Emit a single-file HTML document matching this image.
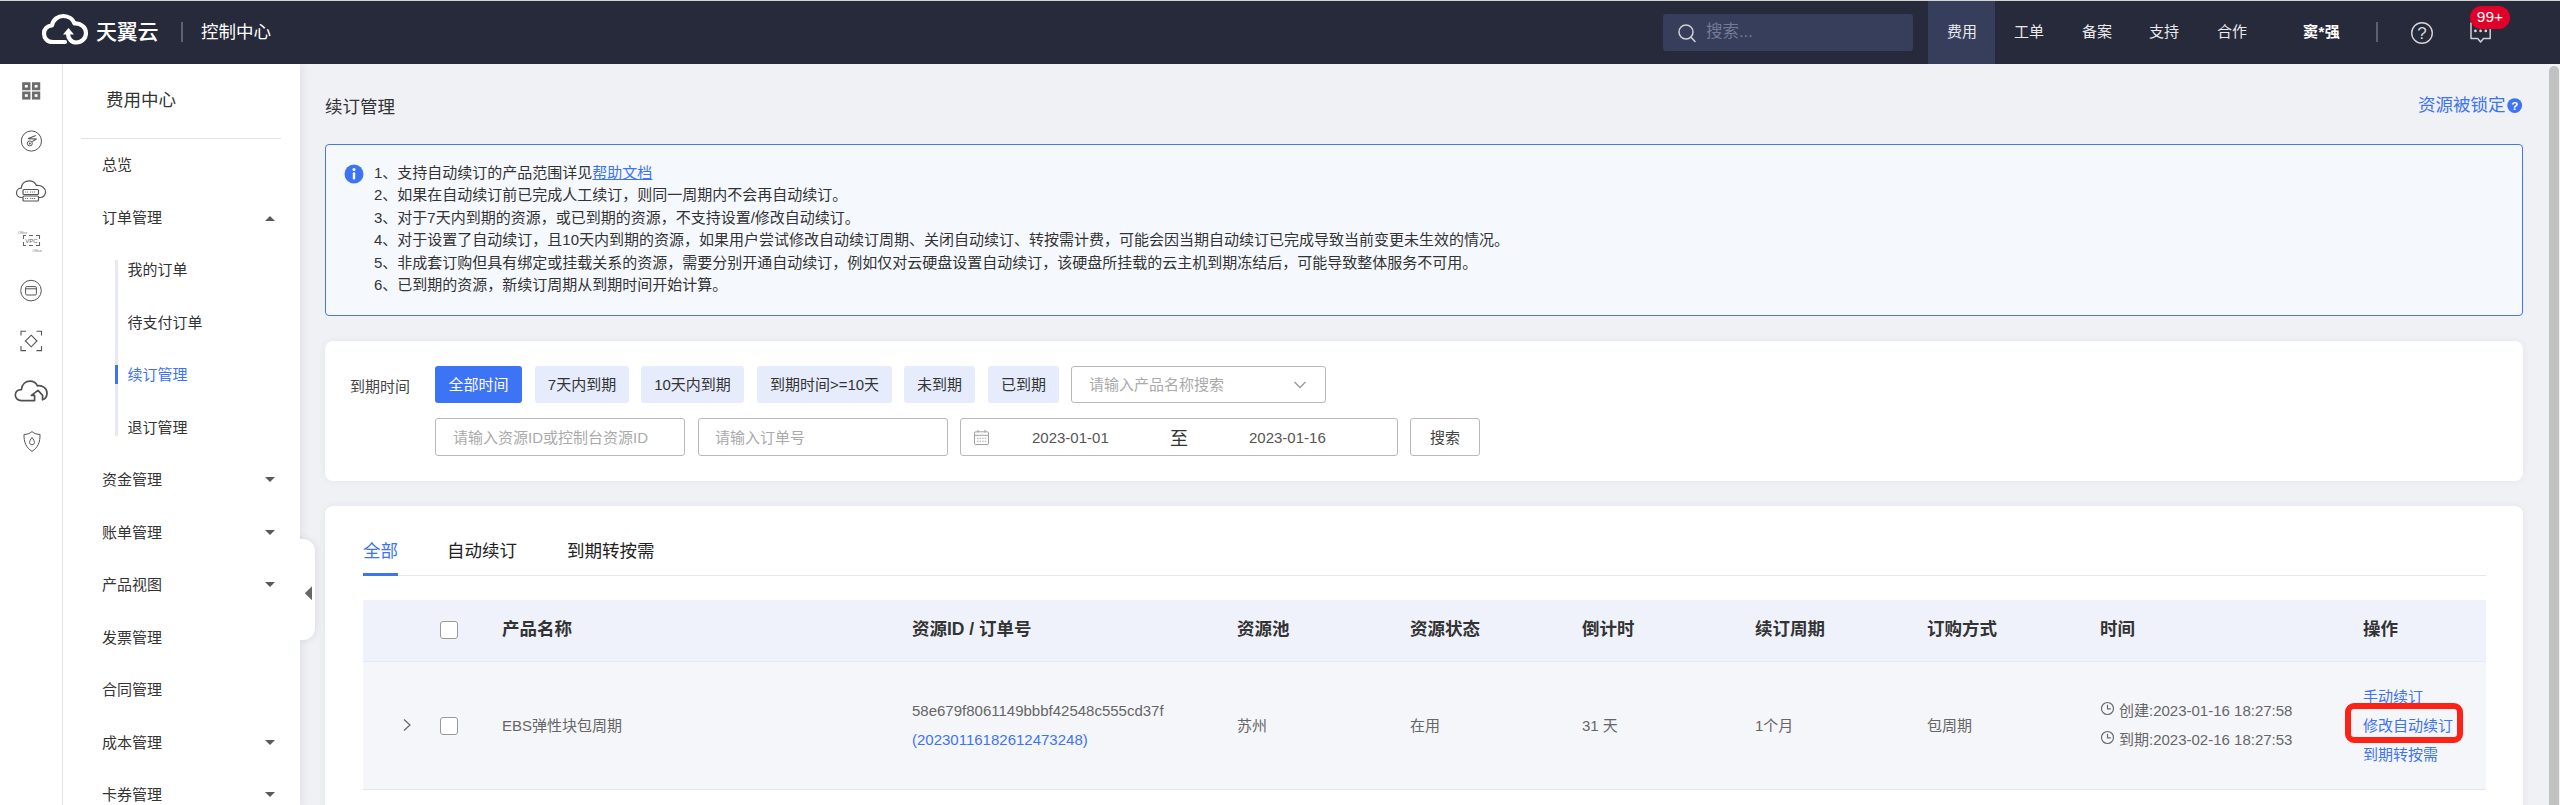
<!DOCTYPE html>
<html lang="zh-CN">
<head>
<meta charset="utf-8">
<title>续订管理</title>
<style>
*{box-sizing:border-box;margin:0;padding:0}
html,body{width:2560px;height:805px;overflow:hidden;background:#f0f1f5}
body{font-family:"Liberation Sans","Noto Sans CJK SC",sans-serif;color:#333;position:relative;font-size:15px}
.abs{position:absolute}
.t{position:absolute;white-space:nowrap;line-height:1}
/* header */
#hdr{position:absolute;left:0;top:0;width:2560px;height:64px;background:#272a3a;border-top:1px solid #d3d3d1}
#hdr .t{color:#fff}
.nav{font-size:15px;top:24px}
/* rail */
#rail{position:absolute;left:0;top:64px;width:63px;height:741px;background:#fff;border-right:1px solid #e3e6f0}
#side{position:absolute;left:63px;top:64px;width:237px;height:741px;background:#fff;box-shadow:1px 0 9px rgba(30,45,80,.10);clip-path:inset(0 -14px 0 0)}
.m1{font-size:15px;color:#333;left:102px}
.m2{font-size:15px;color:#333;left:127.5px}
.car{position:absolute;left:265px;width:0;height:0;border-left:5px solid transparent;border-right:5px solid transparent}
.car.d{border-top:5px solid #5a5a5a}
.car.u{border-bottom:5px solid #5a5a5a}
/* main */
.panel{position:absolute;left:325px;width:2198px;background:#fff;border-radius:8px;box-shadow:0 0 9px rgba(30,45,80,.055)}
.fb{position:absolute;top:366px;height:37px;border-radius:3px;background:#e6ecfc;color:#333;font-size:15px;line-height:37px;text-align:center;white-space:nowrap}
.inp{position:absolute;border:1px solid #b9b9b9;border-radius:3px;background:#fff}
.ph{color:#aaa;font-size:15px}
.th{font-size:17.5px;font-weight:bold;color:#333;top:621px}
.td{font-size:15px;color:#666;top:718px}
.lk{color:#3d73f5}
</style>
</head>
<body>
<!-- HEADER -->
<div id="hdr"></div>
<svg class="abs" style="left:40px;top:12px" width="52" height="34" viewBox="0 0 52 34"><path d="M25 30 H13 C7 30 4 26 4 21.5 C4 17 7.5 13.5 12 13.5 C13 7.5 18 4 23.5 4 C29 4 33 7.5 34.5 11.5 C40.5 11 46 15 46 21 C46 26.5 41.5 30.5 36.5 30.5 C31.5 30.5 28 26.5 28 22" fill="none" stroke="#fff" stroke-width="4.2" stroke-linecap="round" stroke-linejoin="round"/><path d="M23 22.5 L28.5 16 L34 22.5 Z" fill="#fff"/></svg>
<div class="t" style="left:96px;top:20.5px;font-size:21px;font-weight:500;color:#fff;letter-spacing:-0.3px">天翼云</div>
<div class="abs" style="left:181px;top:22px;width:2px;height:20px;background:#5d6070"></div>
<div class="t" style="left:201px;top:23.5px;font-size:17.5px;color:#fff">控制中心</div>

<div class="abs" style="left:1663px;top:14px;width:250px;height:37px;background:#363e5b;border-radius:3px"></div>
<svg class="abs" style="left:1676px;top:22px" width="22" height="22" viewBox="0 0 22 22"><circle cx="10" cy="10" r="7" fill="none" stroke="#d0d0d4" stroke-width="1.5"/><path d="M15 15.2 L19 19.5" stroke="#d0d0d4" stroke-width="1.6" stroke-linecap="round"/></svg>
<div class="t" style="left:1706px;top:23px;font-size:16.5px;color:#737a94">搜索...</div>
<div class="abs" style="left:1928px;top:1px;width:67px;height:63px;background:#363e5b"></div>
<div class="t nav" style="left:1947px;color:#e9e9ec">费用</div>
<div class="t nav" style="left:2014px;color:#e9e9ec">工单</div>
<div class="t nav" style="left:2082px;color:#e9e9ec">备案</div>
<div class="t nav" style="left:2149px;color:#e9e9ec">支持</div>
<div class="t nav" style="left:2217px;color:#e9e9ec">合作</div>
<div class="t nav" style="left:2303px;color:#fff;font-weight:bold;letter-spacing:0.5px">窦*强</div>
<div class="abs" style="left:2376px;top:22px;width:2px;height:20px;background:#5d6070"></div>
<svg class="abs" style="left:2410px;top:21px" width="24" height="24" viewBox="0 0 24 24"><circle cx="12" cy="12" r="10.3" fill="none" stroke="#d4d4d8" stroke-width="1.4"/><text x="12" y="18" font-size="17" text-anchor="middle" fill="#d4d4d8" font-family="Liberation Sans, sans-serif">?</text></svg>
<svg class="abs" style="left:2468px;top:20px" width="26" height="26" viewBox="0 0 26 26"><path d="M3 3 H22.2 V18.5 H15.5 L12.6 22 L9.7 18.5 H3 Z" fill="none" stroke="#d0d0d4" stroke-width="1.5" stroke-linejoin="round"/><circle cx="7.4" cy="10.9" r="1.35" fill="#d8d8dc"/><circle cx="12.6" cy="10.9" r="1.35" fill="#d8d8dc"/><circle cx="17.8" cy="10.9" r="1.35" fill="#d8d8dc"/></svg>
<div class="abs" style="left:2470px;top:6px;width:40px;height:23px;border-radius:11.5px;background:#e1002a;color:#fff;font-size:15.5px;line-height:21px;text-align:center">99+</div>

<!-- RAIL + SIDEBAR -->
<div id="rail"></div>
<div id="side"></div>

<!-- rail icons -->
<svg class="abs" style="left:22px;top:82px" width="20" height="19" viewBox="0 0 20 19"><g fill="none" stroke="#6c6c6c" stroke-width="2.7"><rect x="1.5" y="1.6" width="5.6" height="5.3"/><rect x="11.3" y="1.6" width="5.6" height="5.3"/><rect x="1.5" y="10.9" width="5.6" height="5.3"/><rect x="11.3" y="10.9" width="5.6" height="5.3"/></g></svg>
<svg class="abs" style="left:19px;top:129px" width="24" height="24" viewBox="0 0 24 24"><g fill="none" stroke="#555" stroke-width="1"><circle cx="12.4" cy="12" r="10.1"/><circle cx="10.8" cy="14.4" r="2.5"/><path d="M16.8 6.6 L9.4 9.6 L17.4 10 L13.2 12.6" stroke-width="1.1" stroke-linejoin="round"/></g><circle cx="10.8" cy="14.4" r="1" fill="#555"/></svg>
<svg class="abs" style="left:14px;top:178px" width="34" height="26" viewBox="0 0 34 26"><g fill="none" stroke="#555" stroke-width="1.2" stroke-linejoin="round"><path d="M8.5 19.5 H7 C4 19.5 2.5 17 2.5 14.8 C2.5 12 4.8 10.2 7.2 10.2 C7.6 5.6 11 2.8 15.2 2.8 C18.6 2.8 21.2 4.6 22.4 7.4 C27.4 6.8 31.5 9.8 31.5 14 C31.5 17.4 29 19.5 26.5 19.5 H25"/><rect x="9" y="11.5" width="15.5" height="5" rx="1"/><rect x="9" y="18" width="15.5" height="5" rx="1"/></g><path d="M11 14 H14 M16 14 H22 M11 20.5 H14 M16 20.5 H22" stroke="#777" stroke-width="1" stroke-dasharray="1.2 .8"/></svg>
<svg class="abs" style="left:17px;top:229px" width="30" height="24" viewBox="0 0 30 24"><g fill="none" stroke="#666" stroke-width="1.1"><path d="M9 6.5 H6.5 V10 M6.5 13 V16.5 H9 M19 6.5 H22.5 V10 M22.5 13 V16.5 H19 M12 6.5 H16 M12 16.5 H16"/></g><text x="14.5" y="13.8" font-size="6" text-anchor="middle" fill="#666" font-family="Liberation Sans, sans-serif">VPC</text><text x="1" y="4.6" font-size="3.6" fill="#777" font-family="Liberation Sans, sans-serif">Office</text><text x="15.5" y="22.6" font-size="3.6" fill="#777" font-family="Liberation Sans, sans-serif">Office</text></svg>
<svg class="abs" style="left:19px;top:279px" width="24" height="24" viewBox="0 0 24 24"><g fill="none" stroke="#555" stroke-width="1"><circle cx="12" cy="11.6" r="10.3"/><rect x="6.6" y="7.6" width="10.8" height="8.4" rx="1.2"/><path d="M6.6 9.8 H17.4"/></g></svg>
<svg class="abs" style="left:19px;top:329px" width="25" height="24" viewBox="0 0 25 24"><g fill="none" stroke="#555" stroke-width="1.1"><path d="M2 6.5 V2.3 H7 M17.5 2.3 H22.5 V6.5 M22.5 17 V21.6 H17.5 M7 21.6 H2 V17"/><path d="M12.2 6.2 L18 12 L12.2 17.8 L6.4 12 Z"/></g></svg>
<svg class="abs" style="left:13px;top:378px" width="36" height="26" viewBox="0 0 36 26"><path d="M14 22.6 H8.2 C4.6 22.6 2.3 20 2.3 17 C2.3 13.6 5 11.4 8.4 11.6 C9 6.4 12.6 3.2 17 3.2 C20.4 3.2 23 5 24.4 7.8 C29.6 7 34 10.4 34 15 C34 18.6 32 21 29.6 21.8 L29.6 17.4 L25 12.4 L18.4 17.4 L21.6 17.4 L21.6 22.6 Z" fill="none" stroke="#505050" stroke-width="1.7" stroke-linejoin="round"/></svg>
<svg class="abs" style="left:22px;top:430px" width="20" height="23" viewBox="0 0 20 23"><g fill="none" stroke="#555" stroke-width="1" stroke-linejoin="round"><path d="M10 1.6 C7.6 3.6 5 4.4 2 4.4 C1.8 12 4 17.6 10 21.4 C16 17.6 18.2 12 18 4.4 C15 4.4 12.4 3.6 10 1.6 Z"/><path d="M10 7.4 C8.6 9.6 7.6 10.8 7.6 12.4 C7.6 13.8 8.6 14.8 10 14.8 C11.4 14.8 12.4 13.8 12.4 12.4 C12.4 10.8 11.4 9.6 10 7.4 Z"/></g></svg>
<div class="t" style="left:106px;top:92px;font-size:17.5px;color:#333">费用中心</div>
<div class="abs" style="left:81px;top:137.5px;width:200px;height:1px;background:#dfe3ee"></div>
<div class="t m1" style="top:157px">总览</div>
<div class="t m1" style="top:210px">订单管理</div><div class="car u" style="top:216px"></div>
<div class="abs" style="left:115px;top:260px;width:3px;height:176px;background:#e6e9f5"></div>
<div class="abs" style="left:115px;top:365px;width:3px;height:19px;background:#3d73f5"></div>
<div class="t m2" style="top:262px">我的订单</div>
<div class="t m2" style="top:315px">待支付订单</div>
<div class="t m2" style="top:367px;color:#3d73f5">续订管理</div>
<div class="t m2" style="top:420px">退订管理</div>
<div class="t m1" style="top:472px">资金管理</div><div class="car d" style="top:477px"></div>
<div class="t m1" style="top:525px">账单管理</div><div class="car d" style="top:530px"></div>
<div class="t m1" style="top:577px">产品视图</div><div class="car d" style="top:582px"></div>
<div class="t m1" style="top:630px">发票管理</div>
<div class="t m1" style="top:682px">合同管理</div>
<div class="t m1" style="top:735px">成本管理</div><div class="car d" style="top:740px"></div>
<div class="t m1" style="top:787px">卡券管理</div><div class="car d" style="top:792px"></div>

<!-- MAIN -->
<div class="t" style="left:325px;top:99px;font-size:17.5px;color:#333">续订管理</div>
<div class="t" style="left:2418px;top:97px;font-size:17.5px;color:#3d73f5">资源被锁定</div>
<svg class="abs" style="left:2507px;top:98px" width="16" height="16" viewBox="0 0 16 16"><circle cx="7.7" cy="7.6" r="7.4" fill="#3d73f5"/><text x="7.7" y="11.8" font-size="11.5" font-weight="bold" text-anchor="middle" fill="#fff" font-family="Liberation Sans, sans-serif">?</text></svg>


<!-- INFO BOX -->
<div class="abs" style="left:325px;top:144px;width:2198px;height:172px;background:#f5f9fe;border:1px solid #4377ee;border-radius:4px"></div>
<svg class="abs" style="left:344px;top:164px" width="20" height="20" viewBox="0 0 20 20"><circle cx="10" cy="10" r="9.5" fill="#3d73f5"/><circle cx="10" cy="5.6" r="1.5" fill="#fff"/><rect x="8.8" y="8.2" width="2.4" height="7.4" rx="1" fill="#fff"/></svg>
<div class="abs" style="left:374px;top:161.5px;font-size:15px;line-height:22.6px;color:#333;white-space:nowrap">
1、支持自动续订的产品范围详见<span style="color:#3d73f5;text-decoration:underline">帮助文档</span><br>
2、如果在自动续订前已完成人工续订，则同一周期内不会再自动续订。<br>
3、对于7天内到期的资源，或已到期的资源，不支持设置/修改自动续订。<br>
4、对于设置了自动续订，且10天内到期的资源，如果用户尝试修改自动续订周期、关闭自动续订、转按需计费，可能会因当期自动续订已完成导致当前变更未生效的情况。<br>
5、非成套订购但具有绑定或挂载关系的资源，需要分别开通自动续订，例如仅对云硬盘设置自动续订，该硬盘所挂载的云主机到期冻结后，可能导致整体服务不可用。<br>
6、已到期的资源，新续订周期从到期时间开始计算。
</div>

<!-- FILTER PANEL -->
<div class="panel" style="top:341px;height:140px"></div>
<div class="t" style="left:350px;top:379px;font-size:15px;color:#444">到期时间</div>
<div class="fb" style="left:435px;width:87px;background:#3d73f5;color:#fff">全部时间</div>
<div class="fb" style="left:535px;width:94px">7天内到期</div>
<div class="fb" style="left:641px;width:103px">10天内到期</div>
<div class="fb" style="left:757px;width:135px">到期时间&gt;=10天</div>
<div class="fb" style="left:904px;width:71px">未到期</div>
<div class="fb" style="left:988px;width:71px">已到期</div>
<div class="inp" style="left:1071px;top:366px;width:255px;height:37px"></div>
<div class="t ph" style="left:1089px;top:377px">请输入产品名称搜索</div>
<svg class="abs" style="left:1292.5px;top:380px" width="14" height="10" viewBox="0 0 14 10"><path d="M1.5 2 L7 7.5 L12.5 2" fill="none" stroke="#999" stroke-width="1.3"/></svg>
<div class="inp" style="left:435px;top:418px;width:250px;height:38px"></div>
<div class="t ph" style="left:453px;top:430px">请输入资源ID或控制台资源ID</div>
<div class="inp" style="left:698px;top:418px;width:250px;height:38px"></div>
<div class="t ph" style="left:715px;top:430px">请输入订单号</div>
<div class="inp" style="left:960px;top:418px;width:438px;height:38px"></div>
<svg class="abs" style="left:973px;top:429px" width="17" height="17" viewBox="0 0 17 17"><rect x="1.5" y="2.8" width="14" height="12.7" rx="1.2" fill="none" stroke="#a0a0a0" stroke-width="1"/><path d="M1.5 6.3 H15.5 M5 1 V3.6 M12 1 V3.6" stroke="#a0a0a0" stroke-width="1" fill="none"/><path d="M4 9.4 H13.4 M4 12.4 H13.4" stroke="#b4b4b4" stroke-width="1.2" stroke-dasharray="1.4 1.2"/></svg>
<div class="t" style="left:1032px;top:430px;font-size:15px;color:#555">2023-01-01</div>
<div class="t" style="left:1170px;top:429.5px;font-size:18px;color:#333">至</div>
<div class="t" style="left:1249px;top:430px;font-size:15px;color:#555">2023-01-16</div>
<div class="inp" style="left:1410px;top:418px;width:70px;height:38px"></div>
<div class="t" style="left:1430px;top:430px;font-size:15px;color:#444">搜索</div>

<!-- TABLE PANEL -->
<div class="panel" style="top:506px;height:320px"></div>
<div class="t" style="left:363px;top:542.8px;font-size:17.5px;color:#3d73f5">全部</div>
<div class="t" style="left:447px;top:542.8px;font-size:17.5px;color:#222">自动续订</div>
<div class="t" style="left:567px;top:542.8px;font-size:17.5px;color:#222">到期转按需</div>
<div class="abs" style="left:363px;top:575px;width:2123px;height:1px;background:#e4e7ee"></div>
<div class="abs" style="left:363px;top:573px;width:35px;height:3px;background:#3d73f5"></div>
<div class="abs" style="left:363px;top:600px;width:2123px;height:62px;background:#eff2fb;border-bottom:1px solid #e6e9f5"></div>
<div class="abs" style="left:363px;top:662px;width:2123px;height:128px;background:#f5f6fa;border-bottom:1px solid #e4e7ee"></div>
<div class="abs" style="left:440px;top:621px;width:18px;height:18px;border:1px solid #999;border-radius:3px;background:#fff"></div>
<div class="abs" style="left:440px;top:717px;width:18px;height:18px;border:1px solid #999;border-radius:3px;background:#fff"></div>
<svg class="abs" style="left:401px;top:718px" width="12" height="14" viewBox="0 0 12 14"><path d="M3 1.5 L9 7 L3 12.5" fill="none" stroke="#666" stroke-width="1.2"/></svg>
<div class="t th" style="left:502px">产品名称</div>
<div class="t th" style="left:912px">资源ID / 订单号</div>
<div class="t th" style="left:1237px">资源池</div>
<div class="t th" style="left:1410px">资源状态</div>
<div class="t th" style="left:1582px">倒计时</div>
<div class="t th" style="left:1755px">续订周期</div>
<div class="t th" style="left:1927px">订购方式</div>
<div class="t th" style="left:2100px">时间</div>
<div class="t th" style="left:2363px">操作</div>
<div class="t td" style="left:502px">EBS弹性块包周期</div>
<div class="t td" style="left:912px;top:703px">58e679f8061149bbbf42548c555cd37f</div>
<div class="t td lk" style="left:912px;top:732px">(20230116182612473248)</div>
<div class="t td" style="left:1237px">苏州</div>
<div class="t td" style="left:1410px">在用</div>
<div class="t td" style="left:1582px">31 天</div>
<div class="t td" style="left:1755px">1个月</div>
<div class="t td" style="left:1927px">包周期</div>
<svg class="abs" style="left:2100px;top:701px" width="15" height="15" viewBox="0 0 15 15"><circle cx="7.5" cy="7.5" r="6" fill="none" stroke="#666" stroke-width="1.15"/><path d="M7.5 3.8 V7.8 H10.8" fill="none" stroke="#666" stroke-width="1.15"/></svg>
<svg class="abs" style="left:2100px;top:730px" width="15" height="15" viewBox="0 0 15 15"><circle cx="7.5" cy="7.5" r="6" fill="none" stroke="#666" stroke-width="1.15"/><path d="M7.5 3.8 V7.8 H10.8" fill="none" stroke="#666" stroke-width="1.15"/></svg>
<div class="t td" style="left:2119px;top:703px">创建:2023-01-16 18:27:58</div>
<div class="t td" style="left:2119px;top:732px">到期:2023-02-16 18:27:53</div>
<div class="t td lk" style="left:2363px;top:689px">手动续订</div>
<div class="t td lk" style="left:2363px;top:718px">修改自动续订</div>
<div class="t td lk" style="left:2363px;top:747px">到期转按需</div>
<div class="abs" style="left:2345px;top:703px;width:118px;height:40px;border:6px solid #fd2116;border-radius:9px"></div>
<!-- collapse handle -->
<div class="abs" style="left:296px;top:538.5px;width:19px;height:101px;background:#fff;border-radius:0 12px 12px 0;box-shadow:1px 0 7px rgba(30,45,80,.10);clip-path:inset(-12px -12px -12px 4px)"></div>
<svg class="abs" style="left:300px;top:583px" width="16" height="20" viewBox="0 0 16 20"><path d="M4.8 10.2 L12 3.2 V17.2 Z" fill="#666"/></svg>

<!-- scrollbar -->
<div class="abs" style="left:2548.6px;top:66px;width:10.2px;height:745px;background:#c1c1c1;border-radius:5px"></div>
</body>
</html>
